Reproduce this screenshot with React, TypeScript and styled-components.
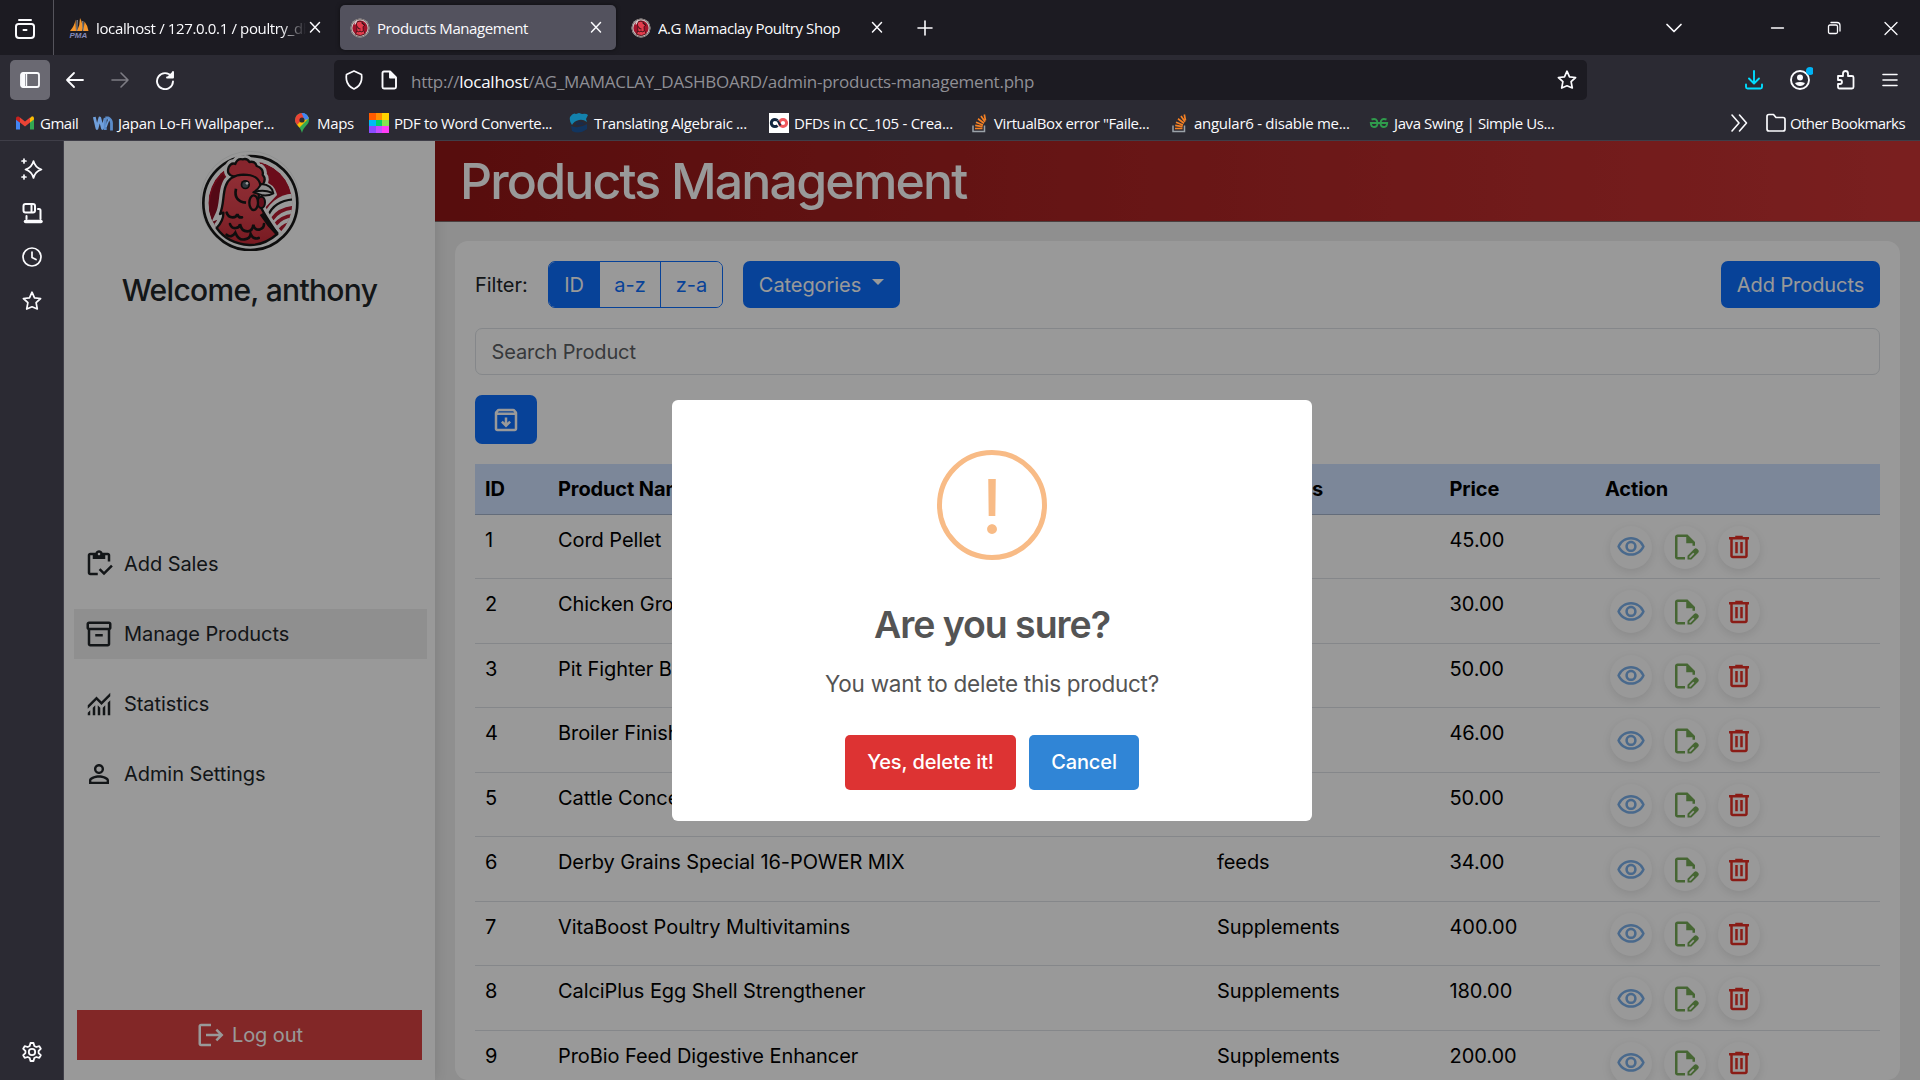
import React from "react";
import styled, { createGlobalStyle, css } from "styled-components";
import { MdLogout, MdPersonOutline, MdOutlineVisibility } from "react-icons/md";

const Global = createGlobalStyle`
  *, *::before, *::after { box-sizing: border-box; }
  html, body { margin: 0; padding: 0; overflow: hidden; background: #2b2a33; }
  button { font: inherit; letter-spacing: inherit; margin: 0; cursor: pointer; }
  svg { display: block; flex: none; }
`;

const Window = styled.div`
  width: 1920px;
  height: 1080px;
  display: flex;
  flex-direction: column;
  overflow: hidden;
  background: #2b2a33;
  color: #fbfbfe;
  font-family: "Open Sans", "Noto Sans", sans-serif;
  font-size: 15px;
`;

/* ---------- browser chrome ---------- */

const TabBar = styled.div`
  height: 55px;
  flex: none;
  display: flex;
  align-items: center;
  background: #1c1b22;
`;

const FirefoxView = styled.div`
  width: 54px;
  height: 55px;
  padding: 2px 0 0 15px;
  margin-right: 5px;
  display: flex;
  align-items: center;
  border-right: 1px solid #55545c;
`;

const TabItem = styled.div<{ $active?: boolean }>`
  width: 276px;
  height: 45px;
  margin-right: 5px;
  padding: 0 13px 0 10px;
  display: flex;
  align-items: center;
  border-radius: 5px;
  ${(p) =>
    p.$active &&
    css`
      background: #53525e;
      box-shadow: 0 0 4px rgba(0, 0, 0, 0.5);
    `}
`;

const TabTitle = styled.span<{ $fade?: boolean }>`
  flex: 1;
  min-width: 0;
  margin: 1px 8px 0 7px;
  overflow: hidden;
  white-space: nowrap;
  letter-spacing: -0.42px;
  ${(p) =>
    p.$fade &&
    css`
      margin-right: 2px;
      letter-spacing: -0.36px;
      mask-image: linear-gradient(to right, #000 88%, transparent 100%);
    `}
`;

const NewTab = styled.div`
  padding-left: 14px;
`;

const WindowButtons = styled.div`
  margin-left: auto;
  padding-right: 20px;
  display: grid;
  grid-template-columns: 18px 18px 18px 18px;
  column-gap: 39px;
  align-items: center;
  svg:first-child { margin-left: -46px; }
`;

const Toolbar = styled.div`
  height: 50px;
  flex: none;
  display: flex;
  align-items: center;
  padding: 0 21px 0 10px;
`;

const PanelToggle = styled.div`
  width: 40px;
  height: 40px;
  display: grid;
  place-items: center;
  border-radius: 5px;
  background: #6a6972;
`;

const NavButtons = styled.div`
  display: flex;
  gap: 25px;
  margin-left: 15px;
`;

const AddressBar = styled.div`
  width: 1253px;
  height: 40px;
  margin-left: 159px;
  padding: 0 10px;
  display: flex;
  align-items: center;
  border-radius: 5px;
  background: #1c1b22;
`;

const Url = styled.span`
  flex: 1;
  margin: 2px 0 0 12px;
  font-size: 17px;
  letter-spacing: -0.24px;
  white-space: nowrap;
  color: #8f8f95;
  b { font-weight: 400; color: #fbfbfe; }
`;

const ToolbarActions = styled.div`
  margin-left: auto;
  display: flex;
  gap: 23px;
  align-items: center;
  svg:nth-child(3) { margin-right: 2px; }
`;

const Bookmarks = styled.div`
  height: 35px;
  flex: none;
  display: flex;
  align-items: center;
  padding: 0 15px 0 15px;
`;

const Bookmark = styled.div<{ $w: number }>`
  width: ${(p) => p.$w}px;
  display: flex;
  align-items: center;
  gap: 5px;
  white-space: nowrap;
`;

const BookmarkText = styled.span<{ $track: number }>`
  letter-spacing: ${(p) => p.$track}px;
`;

const OtherBookmarks = styled.div`
  margin-left: auto;
  display: flex;
  align-items: center;
  white-space: nowrap;
  gap: 4px;
  svg:first-child { margin-right: 13px; }
`;

const Body = styled.div`
  flex: 1;
  min-height: 0;
  display: flex;
  border-top: 1px solid #3f3e48;
`;

const Rail = styled.div`
  width: 64px;
  flex: none;
  display: flex;
  flex-direction: column;
  align-items: center;
  gap: 22px;
  padding: 17px 0 17px;
  border-right: 1px solid #3f3e48;
  svg:last-child { margin-top: auto; }
`;

/* ---------- web page ---------- */

const Page = styled.div`
  position: relative;
  flex: 1;
  min-width: 0;
  display: flex;
  overflow: hidden;
  background: #eeeeee;
  color: #212529;
  font-family: Inter, "Liberation Sans", sans-serif;
  font-size: 20px;
  line-height: 30px;
  letter-spacing: -0.07px;
`;

const Sidebar = styled.aside`
  width: 371px;
  flex: none;
  display: flex;
  flex-direction: column;
  align-items: center;
  padding-top: 10px;
  background: #fff;
  box-shadow: 0 0 13px rgba(0, 0, 0, 0.12);
  z-index: 1;
`;

const Welcome = styled.h4`
  margin: 21px 0 0;
  font-size: 30px;
  line-height: 36px;
  font-weight: 500;
  letter-spacing: -0.69px;
`;

const Menu = styled.nav`
  width: 353px;
  margin-top: 231px;
  margin-right: -2px;
  display: flex;
  flex-direction: column;
  gap: 20px;
`;

const MenuItem = styled.a<{ $active?: boolean }>`
  height: 50px;
  padding-left: 10px;
  display: flex;
  align-items: center;
  gap: 10px;
  background: ${(p) => (p.$active ? "#eeeeee" : "transparent")};
`;

const Logout = styled.a`
  width: 345px;
  height: 50px;
  margin-top: auto;
  margin-bottom: 20px;
  display: flex;
  align-items: center;
  justify-content: center;
  gap: 6px;
  background: #d94141;
  color: #fff;
`;

const Main = styled.main`
  flex: 1;
  min-width: 0;
  display: flex;
  flex-direction: column;
`;

const PageHeader = styled.header`
  height: 81px;
  flex: none;
  padding: 0 25px;
  display: flex;
  align-items: center;
  background: linear-gradient(90deg, #911616, #cc3535);
  border-bottom: 1px solid #7d6a6a;
  color: #fff;
  position: relative;
  z-index: 2;
`;

const PageTitle = styled.h1`
  margin: 0;
  font-size: 50px;
  line-height: 60px;
  font-weight: 500;
  letter-spacing: -1.82px;
`;

const Card = styled.section`
  flex: 1;
  margin: 19px 20px 0;
  padding: 20px;
  display: flex;
  flex-direction: column;
  min-height: 0;
  overflow: hidden;
  border-radius: 13px;
  background: #fff;
`;

const FilterRow = styled.div`
  height: 47px;
  flex: none;
  display: flex;
  align-items: center;
`;

const FilterLabel = styled.span`
  width: 73px;
`;

const ButtonGroup = styled.div`
  height: 47px;
  display: flex;
  border: 1px solid #0d6efd;
  border-radius: 7px;
  overflow: hidden;
  margin-right: 20px;
`;

const GroupButton = styled.button<{ $w: number; $on?: boolean }>`
  width: ${(p) => p.$w}px;
  padding: 0;
  border: 0;
  border-left: ${(p) => (p.$on ? "0" : "1px solid #0d6efd")};
  background: ${(p) => (p.$on ? "#0d6efd" : "#fff")};
  color: ${(p) => (p.$on ? "#fff" : "#0d6efd")};
`;

const PrimaryButton = styled.button<{ $w: number; $h?: number; $push?: boolean }>`
  width: ${(p) => p.$w}px;
  height: ${(p) => p.$h ?? 47}px;
  flex: none;
  margin-left: ${(p) => (p.$push ? "auto" : "0")};
  padding: 0;
  display: flex;
  align-items: center;
  justify-content: center;
  gap: 11px;
  border: 0;
  border-radius: 7px;
  background: #0d6efd;
  color: #fff;
  white-space: nowrap;
`;

const Caret = styled.span`
  margin-top: -5px;
  border-top: 6px solid #fff;
  border-left: 6px solid transparent;
  border-right: 6px solid transparent;
`;

const Search = styled.input`
  height: 47px;
  flex: none;
  margin: 20px 0;
  padding: 0 15.5px;
  border: 1px solid #dee2e6;
  border-radius: 7px;
  background: #fff;
  font: inherit;
  letter-spacing: -0.12px;
  outline: none;
  &::placeholder { color: #5c6064; opacity: 1; }
`;

const columns = css`
  display: grid;
  grid-template-columns: 73px 659px 232.5px 155.5px 1fr;
  flex: none;
`;

const TableHead = styled.div`
  ${columns};
  height: 50.5px;
  margin-top: 20px;
  padding-top: 10px;
  background: #cfe2ff;
  border-bottom: 1px solid #a6b5cc;
  color: #000;
  font-weight: 700;
  letter-spacing: -0.12px;
  span { padding-left: 10px; }
`;

const TableRow = styled.div`
  ${columns};
  height: 64.5px;
  padding-top: 10px;
  border-bottom: 1px solid #dee2e6;
  color: #000;
  > span { padding-left: 10px; }
`;

const Actions = styled.div`
  display: flex;
  gap: 12px;
  padding: 1px 0 0 15px;
`;

const RoundButton = styled.div<{ $c: string }>`
  width: 42px;
  height: 43px;
  display: grid;
  place-items: center;
  border-radius: 50%;
  background: #fff;
  box-shadow: 0 3px 10px rgba(0, 0, 0, 0.1);
  color: ${(p) => p.$c};
`;

/* ---------- confirmation dialog ---------- */

const Backdrop = styled.div`
  position: absolute;
  inset: 0;
  z-index: 10;
  display: grid;
  place-items: center;
  background: rgba(0, 0, 0, 0.4);
`;

const Dialog = styled.div`
  width: 640px;
  height: 421px;
  display: flex;
  flex-direction: column;
  align-items: center;
  border-radius: 6px;
  background: #fff;
  color: #545454;
`;

const WarningRing = styled.div`
  width: 110px;
  height: 110px;
  margin-top: 50px;
  padding-top: 3px;
  display: flex;
  align-items: center;
  justify-content: center;
  border: 5px solid #f8bb86;
  border-radius: 50%;
  color: #f8bb86;
  font-size: 75px;
  line-height: 100px;
`;

const DialogTitle = styled.h2`
  margin: 41px 0 0;
  font-size: 37.5px;
  line-height: 48px;
  font-weight: 600;
  letter-spacing: -1.05px;
`;

const DialogText = styled.p`
  margin: 20px 0 0;
  font-size: 22.5px;
  line-height: 30px;
  letter-spacing: -0.26px;
`;

const DialogButtons = styled.div`
  display: flex;
  gap: 13px;
  margin-top: 36px;
`;

const DialogButton = styled.button<{ $bg: string; $w: number }>`
  width: ${(p) => p.$w}px;
  height: 55px;
  padding: 0 0 2px;
  border: 0;
  border-radius: 5px;
  background: ${(p) => p.$bg};
  color: #fff;
  font-weight: 500;
  letter-spacing: -0.12px;
`;

/* ---------- icons ---------- */

const SYMBOLS = {
  inventory:
    "M640-121 470-291l56-56 114 113 226-226 56 56L640-121Zm200-439h-80v-200h-80v120H280v-120h-80v560h240v80H200q-33 0-56.5-23.5T120-200v-560q0-33 23.5-56.5T200-840h167q11-35 43-57.5t70-22.5q40 0 71.5 22.5T594-840h166q33 0 56.5 23.5T840-760v200ZM480-760q17 0 28.5-11.5T520-800q0-17-11.5-28.5T480-840q-17 0-28.5 11.5T440-800q0 17 11.5 28.5T480-760Z",
  box: "M200-80q-33 0-56.5-23.5T120-160v-451q-18-11-29-28.5T80-680v-120q0-33 23.5-56.5T160-880h640q33 0 56.5 23.5T880-800v120q0 23-11 40.5T840-611v451q0 33-23.5 56.5T760-80H200Zm0-520v440h560v-440H200Zm-40-80h640v-120H160v120Zm200 280h240v-80H360v80Z",
  monitoring:
    "M120-120v-80l80-80v160h-80Zm160 0v-240l80-80v320h-80Zm160 0v-320l80 81v239h-80Zm160 0v-239l80-80v319h-80Zm160 0v-400l80-80v480h-80ZM120-327v-113l280-280 160 160 280-280v113L560-447 400-607 120-327Z",
  archive:
    "m480-240 160-160-56-56-64 64v-168h-80v168l-64-64-56 56 160 160ZM200-640v440h560v-440H200Zm0 520q-33 0-56.5-23.5T120-200v-499q0-14 4.5-27t13.5-24l50-61q11-14 27.5-21.5T250-840h460q18 0 34.5 7.5T772-811l50 61q9 11 13.5 24t4.5 27v499q0 33-23.5 56.5T760-120H200Zm16-600h528l-34-40H250l-34 40Z",
  edit: "M560-80v-123l221-220q9-9 20-13t22-4q12 0 23 4.5t20 13.5l37 37q8 9 12.5 20t4.5 22q0 11-4 22.5T903-300L683-80H560ZM620-140h38l121-122-37-37-122 121v38ZM240-80q-33 0-56.5-23.5T160-160v-640q0-33 23.5-56.5T240-880h320l240 240v120h-80v-80H520v-200H240v640h240v80H240Z",
  trash:
    "M280-120q-33 0-56.5-23.5T200-200v-520h-40v-80h200v-40h240v40h200v80h-40v520q0 33-23.5 56.5T680-120H280Zm400-600H280v520h400v-520ZM360-280h80v-360h-80v360Zm160 0h80v-360h-80v360Z",
};

const Symbol = ({ name, size = 30 }: { name: keyof typeof SYMBOLS; size?: number }) => (
  <svg width={size} height={size} viewBox="0 -960 960 960" fill="currentColor">
    <path d={SYMBOLS[name]} />
  </svg>
);

type LineProps = {
  w?: number;
  h?: number;
  c?: string;
  s?: number;
  children: React.ReactNode;
};

const Line = ({ w = 20, h = 20, c = "#fbfbfe", s = 1.7, children }: LineProps) => (
  <svg
    width={w}
    height={h}
    viewBox={`0 0 ${w} ${h}`}
    fill="none"
    stroke={c}
    strokeWidth={s}
    strokeLinecap="round"
    strokeLinejoin="round"
  >
    {children}
  </svg>
);

const STAR =
  "M10 1.2l2.5 5.6 6.1.7-4.5 4.1 1.2 6.4L10 15.8 4.7 18l1.2-6.4L1.4 7.5l6.1-.7z";

const Close = () => (
  <Line w={14} h={14} s={1.5}>
    <path d="M2.5 1.5l9 9.5M11.5 1.5l-9 9.5" />
  </Line>
);

const BODY =
  "M650 264C668 244 671 232 670 218L660 222C672 196 668 162 677 138 686 112 706 105 730 104 760 104 778 112 782 138L776 168C774 196 790 218 832 282 802 308 774 316 748 315 704 312 672 296 650 264Z";
const COMB =
  "M702 110q-24-6-16-28 8-16 20-10 6-18 22-14 14-4 20 8 18-4 22 12 22 8 18 26 12 14 0 30l-12 4q-26-40-74-28z";

const Rooster = ({ size }: { size: number }) => (
  <svg width={size} height={size} viewBox="600 33 300 300">
    <defs>
      <clipPath id="disc">
        <circle cx="751" cy="189" r="126" />
      </clipPath>
      <linearGradient id="feather" x1="0" y1="0" x2="0" y2="1">
        <stop offset="0" stopColor="#f04d59" />
        <stop offset="0.6" stopColor="#dc3f4a" />
        <stop offset="1" stopColor="#c82b38" />
      </linearGradient>
    </defs>
    <circle cx="750" cy="183" r="149" fill="#fff" stroke="#dfe3e3" strokeWidth="1.5" />
    <circle cx="751" cy="189" r="141" fill="#fff" stroke="#181818" strokeWidth="8" />
    <g clipPath="url(#disc)">
      <circle cx="751" cy="189" r="126" fill="#b3142c" />
      <path d="M640 280q-22-60-6-120 10-34 34-58l14 20-20 110z" fill="#8d1024" />
      <path d="M784 240q30-82 110-80v130l-60 30z" fill="#fff" />
      <g fill="none" stroke="#b81b31" strokeWidth="11">
        <path d="M816 238q22-34 74-36" />
        <path d="M826 254q20-26 60-28" />
        <path d="M840 270q14-18 42-20" />
      </g>
      <path d="M804 228q18-46 78-50" fill="none" stroke="#181818" strokeWidth="7" />
      <path d={BODY} fill="#fff" stroke="#fff" strokeWidth="26" />
    </g>
    <path d={COMB} fill="#fff" stroke="#fff" strokeWidth="24" strokeLinejoin="round" />
    <path d="M756 156q8-24 34-22 24 6 30 28l-28 30q-20 26-34 10z" fill="#fff" stroke="#fff" strokeWidth="20" />
    <path d={COMB} fill="#e23f4c" stroke="#181818" strokeWidth="7" strokeLinejoin="round" />
    <path d={BODY} fill="url(#feather)" stroke="#181818" strokeWidth="7" strokeLinejoin="round" />
    <path d="M708 146q-8 38 30 42" fill="none" stroke="#181818" strokeWidth="8" />
    <ellipse cx="784" cy="187" rx="11" ry="17" fill="#a81c30" stroke="#181818" strokeWidth="6" />
    <ellipse cx="761" cy="188" rx="13" ry="22" fill="#e04452" stroke="#181818" strokeWidth="7" />
    <path
      d="M760 157q14-8 24-25 32 2 36 28-14 8-32 6z"
      fill="#f0f0f0"
      stroke="#181818"
      strokeWidth="6"
      strokeLinejoin="round"
    />
    <path d="M764 156q26-8 52 2" stroke="#181818" strokeWidth="6" fill="none" />
    <circle cx="736" cy="134" r="14" fill="#181818" />
    <circle cx="736" cy="134" r="9" fill="#50606a" />
    <circle cx="741" cy="130" r="4" fill="#fff" />
    <g fill="none" stroke="#181818" strokeWidth="8" strokeLinecap="round">
      <path d="M680 218q4 14 18 14 12 0 14-10 2 12 14 10" />
      <path d="M690 252q4 14 18 12 12-2 12-12 4 22 22 22 16 0 18-20 4 18 20 14 12-4 12-16" />
      <path d="M680 284q14 12 26-6 10 24 28 20 16-2 18-16 8 18 24 12" />
    </g>
    <path d="M784 222q20 32 48 60" stroke="#181818" strokeWidth="11" fill="none" />
  </svg>
);

const Favicon = () => (
  <svg width="20" height="20" viewBox="0 0 20 20">
    <circle cx="10" cy="10" r="9.5" fill="#c9c2c2" />
    <circle cx="10" cy="10" r="9" fill="none" stroke="#77706f" />
    <circle cx="10" cy="10" r="7.6" fill="#a3122a" />
    <path d="M6.4 5.5Q7 3 10 3.2q3 .3 3 2.8l2 1.2-2 1.4q-.6 3 2.2 7.2-4.600 3.300-9.600.6 1.600-4 1.300-7.200z" fill="#e33c4c" stroke="#351015" strokeWidth=".8" />
    <path d="M7.500 8.500q.5 3 3 2.500M7 13q1.500 1.500 3 0 1.500 1.500 3 0M11.500 5l3 2" stroke="#2a1115" fill="none" />
    <path d="M5 6.500Q5.500 4 7 3.200" stroke="#ddd" strokeWidth="1.200" fill="none" />
  </svg>
);

const PmaIcon = () => (
  <svg width="20" height="20" viewBox="0 0 20 20" overflow="visible">
    <path d="M6.500 1.500L7 13H1Q5.500 8 6.500 1.500zM11 0q3.500 6 2 13H8Q11 7 11 0zM15.500 3.500Q19 8 19.500 13H14.500z" fill="#f6962b" />
    <path d="M8.200 2L7.800 13M13.800 3l.4 10" stroke="#c9c9c9" strokeWidth=".8" />
    <text x="0.500" y="19.500" fontSize="8" fontWeight="700" fontStyle="italic" fontFamily="Liberation Sans, sans-serif" fill="#8389b8">
      PMA
    </text>
  </svg>
);

const GmailIcon = () => (
  <svg width="20" height="20" viewBox="0 0 20 20">
    <path d="M1 6v10.500h4V9z" fill="#4285f4" />
    <path d="M15 9v7.500h4V6z" fill="#34a853" />
    <path d="M15 5v4.600L19 6.500V5.200q0-1.900-2-1.900z" fill="#fbbc04" />
    <path d="M5 4.500l5 4 5-4v5.100l-5 4-5-4z" fill="#ea4335" />
    <path d="M1 5.200v1.500l4 3V4.500l-1.500-1Q1 3 1 5.200z" fill="#c5221f" />
  </svg>
);

const WIcon = () => (
  <svg width="20" height="20" viewBox="0 0 20 20" fill="none" stroke="#6f9fdb" strokeWidth="2.800" strokeLinejoin="round">
    <path d="M1.300 4L4 15.500 6.800 5 9.500 15.500 12.300 5" />
    <path d="M12.300 5v12M12.300 5h3q3.200 2 3.200 5v7.500" stroke="#5b8cca" />
    <path d="M13 14l3-8" strokeWidth="1.600" />
  </svg>
);

const MapsIcon = () => (
  <svg width="20" height="20" viewBox="0 0 20 20">
    <defs>
      <clipPath id="pin">
        <path d="M10 0a7 7 0 0 0-7 7c0 5 5.500 6 7 13 1.500-7 7-8 7-13a7 7 0 0 0-7-7z" />
      </clipPath>
    </defs>
    <g clipPath="url(#pin)">
      <path d="M0 0h20v20H0z" fill="#34a853" />
      <path d="M10 7L19 0v3L4 18V12z" fill="#fbbc04" />
      <path d="M10 7L18-1h-8z" fill="#4285f4" />
      <path d="M2 8L4 2l6-3 2 5-7 8z" fill="#ea4335" />
      <path d="M9-1h9l1 6-6 2z" fill="#4285f4" />
    </g>
    <circle cx="10" cy="7" r="2.600" fill="#2b2a33" />
  </svg>
);

const PDF_COLOURS = ["#ff5b00", "#ff8f00", "#ffd400", "#00bcf5", "#00d26a", "#86e650", "#8a4cff", "#c44dff", "#ff3df5"];

const PdfIcon = () => (
  <svg width="20" height="20" viewBox="0 0 3 3" shapeRendering="crispEdges">
    {PDF_COLOURS.map((c, i) => (
      <rect key={c} x={i % 3} y={Math.floor(i / 3)} width="1" height="1" fill={c} />
    ))}
  </svg>
);

const CourseIcon = () => (
  <svg width="20" height="20" viewBox="0 0 20 20">
    <path d="M1 4q3-5 6-3l3-1 3 1q4-1 6 1l-2 4 1 3q-4-3-8-2-5 1-7 5-3-4-2-8z" fill="#1382ad" />
    <path d="M2 13q8 3 16-2v5q-8 6-15 2z" fill="#12355f" />
    <path d="M7 9q5-2 9 2-5 2-9 1z" fill="#1a2b49" />
  </svg>
);

const CcIcon = () => (
  <svg width="20" height="20" viewBox="0 0 20 20" fill="none" strokeWidth="3">
    <rect width="20" height="20" fill="#fff" />
    <path d="M8.500 7.500A3.600 3.600 0 1 0 8.500 12.500" stroke="#12263f" />
    <circle cx="14" cy="10" r="3.600" stroke="#f0575c" />
    <path d="M8.500 7.500l3 5" stroke="#12263f" strokeWidth="2" />
  </svg>
);

const StackIcon = () => (
  <svg width="20" height="20" viewBox="0 0 20 20" fill="none" strokeWidth="1.700">
    <path d="M4 12.500V18.500H15.500V12.500" stroke="#9aa1a8" strokeWidth="1.500" />
    <path d="M6 15.500h7.500M6.200 12.400l7.400 1.300M7 9.200l7 2.800M9 5.800l6 4.500M12 3l4 5.800M15.300 1.500l1.200 6" stroke="#f48024" />
  </svg>
);

const GfgIcon = () => (
  <svg width="20" height="20" viewBox="0 0 20 20" fill="none" stroke="#2f9b4c" strokeWidth="1.900">
    <path d="M2.500 6.500Q8 4.500 8.500 10 8.500 14 5 14 2 14 1.800 10H18.200Q18 14 15 14 11.500 14 11.500 10 12 4.500 17.500 6.500" />
  </svg>
);

/* ---------- data ---------- */

const BOOKMARKS: [React.ReactNode, string, number, number][] = [
  [<GmailIcon />, "Gmail", 78, -0.5],
  [<WIcon />, "Japan Lo-Fi Wallpaper...", 199, -0.28],
  [<MapsIcon />, "Maps", 77, -0.35],
  [<PdfIcon />, "PDF to Word Converte...", 200, -0.4],
  [<CourseIcon />, "Translating Algebraic ...", 200, -0.36],
  [<CcIcon />, "DFDs in CC_105 - Crea...", 200, -0.27],
  [<StackIcon />, 'VirtualBox error "Faile...', 200, -0.4],
  [<StackIcon />, "angular6 - disable me...", 200, -0.27],
  [<GfgIcon />, "Java Swing | Simple Us...", 200, -0.4],
];

const PRODUCTS = [
  ["Cord Pellet", "feeds", "45.00"],
  ["Chicken Grower", "feeds", "30.00"],
  ["Pit Fighter Booster", "feeds", "50.00"],
  ["Broiler Finisher", "feeds", "46.00"],
  ["Cattle Concentrate", "feeds", "50.00"],
  ["Derby Grains Special 16-POWER MIX", "feeds", "34.00"],
  ["VitaBoost Poultry Multivitamins", "Supplements", "400.00"],
  ["CalciPlus Egg Shell Strengthener", "Supplements", "180.00"],
  ["ProBio Feed Digestive Enhancer", "Supplements", "200.00"],
];

export default function App() {
  return (
    <Window>
      <Global />
      <TabBar>
        <FirefoxView>
          <Line w={20} h={20} s={2}>
            <path d="M4 1h12" />
            <path d="M3.500 5h13q2.500 0 2.500 2.500V16q0 3-3 3H4q-3 0-3-3V7.500Q1 5 3.500 5zM8.500 11h3" />
          </Line>
        </FirefoxView>
        <TabItem>
          <PmaIcon />
          <TabTitle $fade>localhost / 127.0.0.1 / poultry_db</TabTitle>
          <Close />
        </TabItem>
        <TabItem $active>
          <Favicon />
          <TabTitle>Products Management</TabTitle>
          <Close />
        </TabItem>
        <TabItem>
          <Favicon />
          <TabTitle>A.G Mamaclay Poultry Shop</TabTitle>
          <Close />
        </TabItem>
        <NewTab>
          <Line w={18} h={18} s={1.6}>
            <path d="M9 2v14M2 9h14" />
          </Line>
        </NewTab>
        <WindowButtons>
          <Line w={18} h={18} s={1.7}>
            <path d="M2 5.500l7 7 7-7" />
          </Line>
          <Line w={18} h={18} s={1.3}>
            <path d="M3.500 9h12" />
          </Line>
          <Line w={18} h={18} s={1.3}>
            <path d="M5 6h6q1.500 0 1.500 1.500v5.500q0 1.500-1.500 1.500H5q-1.500 0-1.500-1.500V7.500Q3.500 6 5 6zM6 3.500h6q3 0 3 3V12" />
          </Line>
          <Line w={18} h={18} s={1.3}>
            <path d="M3 3.500l12 12M15 3.500l-12 12" />
          </Line>
        </WindowButtons>
      </TabBar>

      <Toolbar>
        <PanelToggle>
          <Line s={1.800}>
            <rect x="1" y="3" width="18" height="14" rx="2" />
            <path d="M2.500 4.500v11M4 4v12" strokeWidth="2.400" />
            <path d="M6.500 4v12" strokeWidth="1.400" />
          </Line>
        </PanelToggle>
        <NavButtons>
          <Line s={1.800}>
            <path d="M18 10H2M9 3L2 10l7 7" />
          </Line>
          <Line s={1.600} c="#7d7c84">
            <path d="M2 10h16M11 3l7 7-7 7" />
          </Line>
          <Line s={1.900}>
            <path d="M16.500 6.500A8 8 0 1 0 18 11.500M12 7.500h6V2" />
            <path d="M13.500 7l4-4v4z" fill="#fbfbfe" />
          </Line>
        </NavButtons>
        <AddressBar>
          <Line s={1.700}>
            <path d="M10 1l7.500 3.500q.5 2.500 0 5.500-1 6-7.500 9Q3.500 16 2.500 10 2 7 2.500 4.500z" />
          </Line>
          <Line w={35} s={1.900}>
            <path d="M20 1.500h6l6 6V17q0 1.500-1.500 1.500h-10.500q-1.500 0-1.500-1.500V3q0-1.500 1.500-1.500zM26 2v5.500h6" />
            <path d="M26.500 2.500v4.500h4.500z" fill="#fbfbfe" />
          </Line>
          <Url>
            http://<b>localhost</b>/AG_MAMACLAY_DASHBOARD/admin-products-management.php
          </Url>
          <Line s={1.700}>
            <path d={STAR} />
          </Line>
        </AddressBar>
        <ToolbarActions>
          <Line c="#00ddff" s={1.900}>
            <path d="M10 1v12M5 8.500l5 5 5-5M2 14.500v2.500q0 1.500 1.500 1.500h13q1.500 0 1.500-1.500v-2.500" />
          </Line>
          <Line w={26} h={26} s={1.900}>
            <circle cx="13" cy="13" r="9" />
            <circle cx="13" cy="10.500" r="3" fill="#fbfbfe" stroke="none" />
            <path d="M8 16q5-2 10 0-1.500 3-5 3t-5-3z" fill="#fbfbfe" stroke="none" />
            <circle cx="23" cy="4" r="4" fill="#00b3f4" stroke="none" />
          </Line>
          <Line s={1.800}>
            <path d="M2 6h5V3.500q0-2.500 2.500-2.500T12 3.500V6h4q1.500 0 1.500 1.500V17q0 1.500-1.500 1.500H3.500Q2 18.500 2 17v-3h2q2 0 2-2t-2-2H2z" />
          </Line>
          <Line w={18} s={1.600}>
            <path d="M2 4.500h14M2 10h14M2 15.500h14" />
          </Line>
        </ToolbarActions>
      </Toolbar>

      <Bookmarks>
        {BOOKMARKS.map(([icon, label, w, track]) => (
          <Bookmark key={label} $w={w}>
            {icon}
            <BookmarkText $track={track}>{label}</BookmarkText>
          </Bookmark>
        ))}
        <OtherBookmarks>
          <Line s={1.600}>
            <path d="M3 2l7 8-7 8M10.500 2l7 8-7 8" />
          </Line>
          <Line s={1.700}>
            <path d="M3 1.500h4.500l2.500 3h7q2 0 2 2V16q0 2-2 2H3q-2 0-2-2V3.500q0-2 2-2z" />
          </Line>
          <BookmarkText $track={-0.57}>Other Bookmarks</BookmarkText>
        </OtherBookmarks>
      </Bookmarks>

      <Body>
        <Rail>
          <Line w={22} h={22} s={1.700}>
            <path d="M12.500 3q1.500 6.500 8 8.500-6.500 2-8 8.500-1.500-6.500-8-8.500 6.500-2 8-8.500zM3 1v4M1 3h4M3 17v4M1 19h4" />
          </Line>
          <Line w={22} h={22} s={2}>
            <rect x="2.500" y="2" width="11.500" height="8.500" rx="2" />
            <path d="M10.500 2.500v7.500M17 7h1q1.500 0 1.500 1.500V17M5.500 14v3" />
            <path d="M4.500 19.500h15.500" strokeWidth="3.500" />
          </Line>
          <Line w={22} h={22} s={1.700}>
            <circle cx="11" cy="11" r="9" />
            <path d="M11 6v5.500l4 2" />
          </Line>
          <Line w={22} h={22} s={1.700}>
            <path transform="translate(1 1)" d={STAR} />
          </Line>
          <Line w={22} h={22} s={1.800}>
            <circle cx="11" cy="11" r="3.200" />
            <path d="M9.500 2h3l.8 3 2 1 3-.9 1.500 2.700-2.200 2.100v2.200l2.200 2.100-1.500 2.700-3-.9-2 1-.8 3h-3l-.8-3-2-1-3 .9-1.500-2.700 2.200-2.100V9.900L2.200 7.800l1.500-2.700 3 .9 2-1z" />
          </Line>
        </Rail>

        <Page>
          <Sidebar>
            <Rooster size={100} />
            <Welcome>Welcome, anthony</Welcome>
            <Menu>
              <MenuItem>
                <Symbol name="inventory" />
                Add Sales
              </MenuItem>
              <MenuItem $active>
                <Symbol name="box" />
                Manage Products
              </MenuItem>
              <MenuItem>
                <Symbol name="monitoring" />
                Statistics
              </MenuItem>
              <MenuItem>
                <MdPersonOutline size={30} />
                Admin Settings
              </MenuItem>
            </Menu>
            <Logout>
              <MdLogout size={30} />
              Log out
            </Logout>
          </Sidebar>

          <Main>
            <PageHeader>
              <PageTitle>Products Management</PageTitle>
            </PageHeader>
            <Card>
              <FilterRow>
                <FilterLabel>Filter:</FilterLabel>
                <ButtonGroup>
                  <GroupButton $w={50} $on>ID</GroupButton>
                  <GroupButton $w={61}>a-z</GroupButton>
                  <GroupButton $w={62}>z-a</GroupButton>
                </ButtonGroup>
                <PrimaryButton $w={157}>
                  Categories
                  <Caret />
                </PrimaryButton>
                <PrimaryButton $w={159} $push>
                  Add Products
                </PrimaryButton>
              </FilterRow>
              <Search placeholder="Search Product" />
              <PrimaryButton $w={62} $h={49}>
                <Symbol name="archive" />
              </PrimaryButton>
              <TableHead>
                <span>ID</span>
                <span>Product Name</span>
                <span>Categories</span>
                <span>Price</span>
                <span>Action</span>
              </TableHead>
              {PRODUCTS.map(([name, category, price], i) => (
                <TableRow key={name}>
                  <span>{i + 1}</span>
                  <span>{name}</span>
                  <span>{category}</span>
                  <span>{price}</span>
                  <Actions>
                    <RoundButton $c="#7aafea">
                      <MdOutlineVisibility size={30} />
                    </RoundButton>
                    <RoundButton $c="#76aa55">
                      <Symbol name="edit" />
                    </RoundButton>
                    <RoundButton $c="#e63025">
                      <Symbol name="trash" />
                    </RoundButton>
                  </Actions>
                </TableRow>
              ))}
            </Card>
          </Main>

          <Backdrop>
            <Dialog>
              <WarningRing>!</WarningRing>
              <DialogTitle>Are you sure?</DialogTitle>
              <DialogText>You want to delete this product?</DialogText>
              <DialogButtons>
                <DialogButton $bg="#dd3333" $w={171}>
                  Yes, delete it!
                </DialogButton>
                <DialogButton $bg="#3085d6" $w={110}>
                  Cancel
                </DialogButton>
              </DialogButtons>
            </Dialog>
          </Backdrop>
        </Page>
      </Body>
    </Window>
  );
}
